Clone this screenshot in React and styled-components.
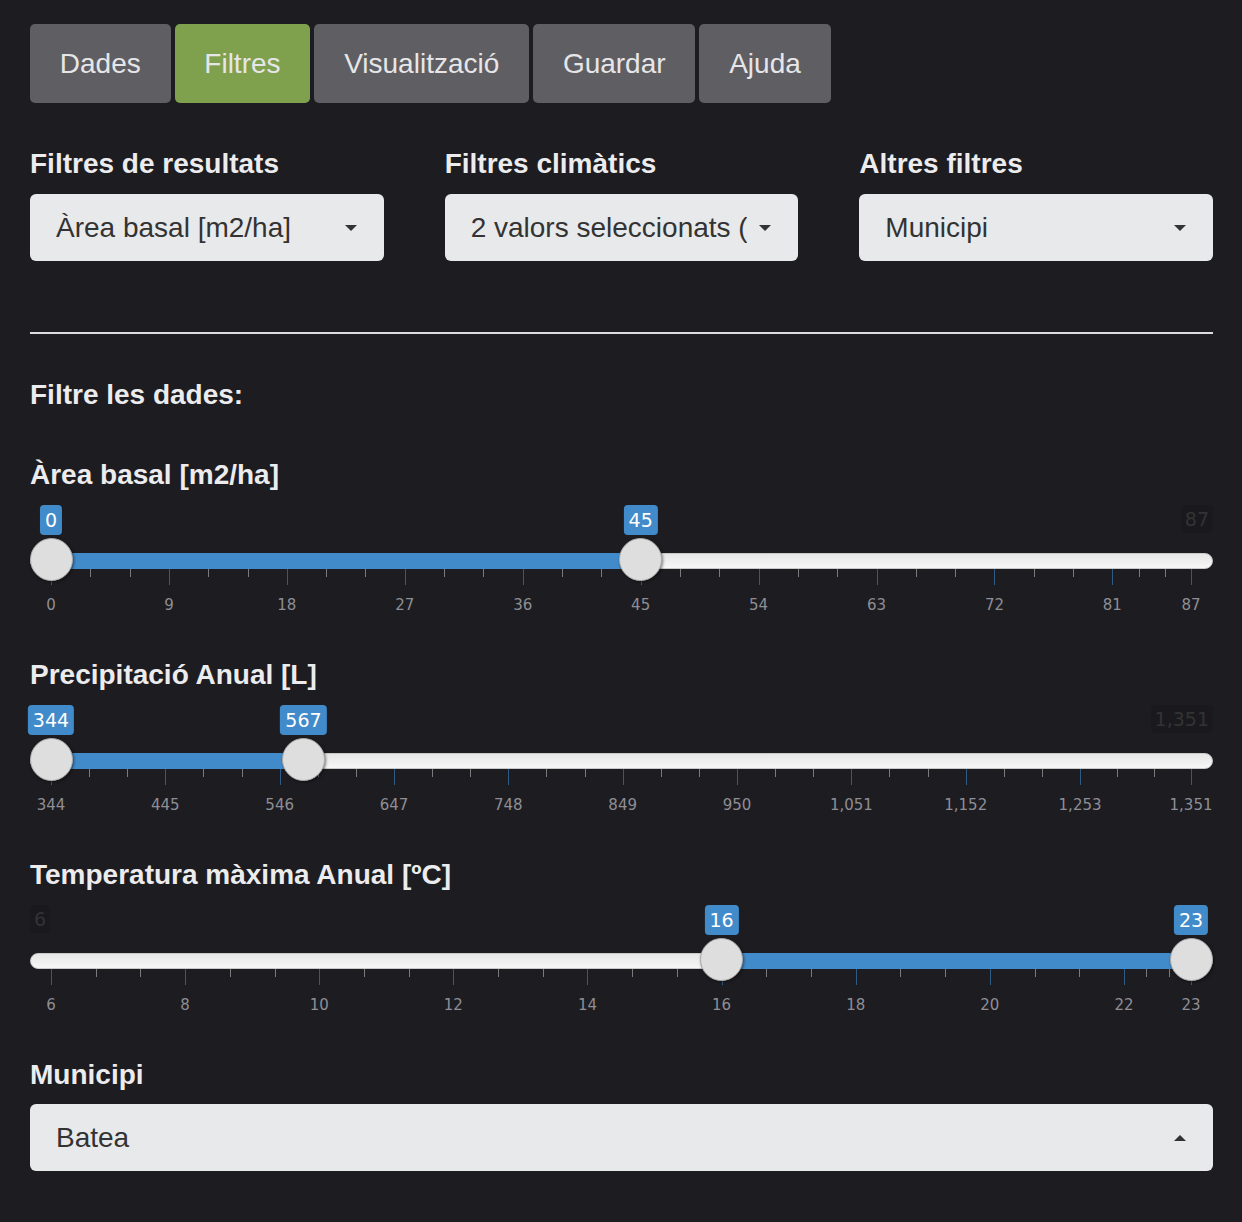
import React from "react";
import styled, { createGlobalStyle } from "styled-components";

const GlobalStyle = createGlobalStyle`
  body{
    margin:0;
    background:#1d1c21;
    font-family:"Liberation Sans", Arial, sans-serif;
    color:#e9e9ea;
  }
`;

const Page = styled.div`
  width:1183px;
  padding:24px 29px 40px 30px;
`;

const TabBar = styled.div`
  display:flex;
  gap:4px;
`;

const Tab = styled.div`
  height:79px;
  padding:0 29.8px;
  display:flex;
  align-items:center;
  border-radius:5px;
  font-size:28px;
  color:#e6e6e8;
  background:${p => (p.active ? "#7fa04d" : "#5f5e63")};
`;

const FilterRow = styled.div`
  margin-top:41px;
  display:grid;
  grid-template-columns:repeat(3, minmax(0, 1fr));
  column-gap:61px;
`;

const Field = styled.div`
  min-width:0;
`;

const Label = styled.div`
  height:40px;
  line-height:40px;
  font-size:28px;
  font-weight:bold;
  color:#ececee;
  margin-top:${p => p.top || 0}px;
`;

const Select = styled.div`
  position:relative;
  margin-top:${p => (p.tight ? 9 : 10)}px;
  height:67px;
  box-sizing:border-box;
  padding:0 51px 0 26px;
  display:flex;
  align-items:center;
  background:#e8e9eb;
  border-radius:6px;
  font-size:28px;
  color:#333;
`;

const Value = styled.span`
  flex:1;
  min-width:0;
  white-space:nowrap;
  overflow:hidden;
`;

const Caret = styled.span`
  position:absolute;
  right:27px;
  top:50%;
  margin-top:-3px;
  width:0;
  height:0;
  border-left:6px solid transparent;
  border-right:6px solid transparent;
  ${p => (p.up ? "border-bottom:6px solid #333;" : "border-top:6px solid #333;")}
`;

const Rule = styled.hr`
  margin:71px 0 0;
  border:0;
  height:2px;
  background:#dcdcde;
`;

const Slider = styled.div`
  display:flex;
  flex-direction:column;
  margin:5px 0 36px;
  height:119px;
  font-family:"DejaVu Sans", Verdana, sans-serif;
`;

/* each row of the slider is a strip; the things inside sit at their value */
const Strip = styled.div`
  position:relative;
  height:${p => p.h}px;
  flex:none;
`;

const Line = styled.div`
  margin-top:${p => p.top}px;
  height:16px;
  box-sizing:border-box;
  border-radius:8px;
  border:1px solid #c9c9c9;
  background:linear-gradient(to bottom, #dedede -50%, #ffffff 150%);
`;

const Bar = styled.div`
  position:absolute;
  top:15px;
  height:16px;
  background:#428bca;
`;

const Handle = styled.div`
  position:absolute;
  top:0;
  width:43px;
  height:43px;
  margin-left:-21.5px;
  box-sizing:border-box;
  border-radius:50%;
  border:1px solid #ababab;
  background:#dedede;
  box-shadow:1px 1px 3px rgba(0,0,0,0.5);
`;

const Badge = styled.div`
  position:absolute;
  top:5px;
  transform:translateX(-50%);
  height:30px;
  line-height:30px;
  padding:0 5px;
  border-radius:4px;
  font-size:19px;
  color:#fff;
  background:#428bca;
`;

const Ghost = styled.div`
  position:absolute;
  top:5px;
  ${p => (p.side === "right" ? "right:0;" : "left:0;")}
  height:28px;
  line-height:28px;
  padding:0 4px;
  border-radius:4px;
  font-size:19px;
  color:#333;
  background:rgba(0,0,0,0.1);
`;

const Tick = styled.div`
  position:absolute;
  top:31px;
  width:1px;
  height:${p => (p.major ? 16 : 8)}px;
  background:${p => (p.major ? "#2f5c87" : "#7a7a80")};
`;

const TickText = styled.div`
  position:absolute;
  bottom:0;
  transform:translateX(-50%);
  font-size:15px;
  line-height:18px;
  color:#8e8e94;
`;

const sliders = [
  { label: "Àrea basal [m2/ha]", min: 0, max: 87, from: 0, to: 45, marks: [0, 9, 18, 27, 36, 45, 54, 63, 72, 81, 87] },
  { label: "Precipitació Anual [L]", min: 344, max: 1351, from: 344, to: 567, marks: [344, 445, 546, 647, 748, 849, 950, 1051, 1152, 1253, 1351] },
  { label: "Temperatura màxima Anual [ºC]", min: 6, max: 23, from: 16, to: 23, marks: [6, 8, 10, 12, 14, 16, 18, 20, 22, 23] },
];

const fmt = n => n.toLocaleString("en-US");
// the handles travel between 21px and (width - 22px)
const pos = f => `calc(21px + ${f} * (100% - 43px))`;

const RangeSlider = ({ min, max, from, to, marks }) => {
  const frac = v => (v - min) / (max - min);
  const ticks = [];
  marks.forEach((m, i) => {
    ticks.push({ f: frac(m), major: true });
    if (i < marks.length - 1) {
      const a = frac(m), b = frac(marks[i + 1]);
      ticks.push({ f: a + (b - a) / 3 }, { f: a + (2 * (b - a)) / 3 });
    }
  });
  return (
    <Slider>
      <Strip h={38}>
        {from !== min && <Ghost side="left">{fmt(min)}</Ghost>}
        {to !== max && <Ghost side="right">{fmt(max)}</Ghost>}
        <Badge style={{ left: pos(frac(from)) }}>{fmt(from)}</Badge>
        <Badge style={{ left: pos(frac(to)) }}>{fmt(to)}</Badge>
      </Strip>
      <Strip h={32}>
        <Line top={15} />
        <Bar style={{ left: pos(frac(from)), width: `calc(${frac(to) - frac(from)} * (100% - 43px))` }} />
        {ticks.map((t, i) => (
          <Tick key={i} major={t.major} style={{ left: pos(t.f) }} />
        ))}
        <Handle style={{ left: pos(frac(from)) }} />
        <Handle style={{ left: pos(frac(to)) }} />
      </Strip>
      <Strip h={44}>
        {marks.map(m => (
          <TickText key={m} style={{ left: pos(frac(m)) }}>{fmt(m)}</TickText>
        ))}
      </Strip>
    </Slider>
  );
};

const App = () => (
  <Page>
    <GlobalStyle />
    <TabBar>
      <Tab>Dades</Tab>
      <Tab active>Filtres</Tab>
      <Tab>Visualització</Tab>
      <Tab>Guardar</Tab>
      <Tab>Ajuda</Tab>
    </TabBar>
    <FilterRow>
      <Field>
        <Label>Filtres de resultats</Label>
        <Select><Value>Àrea basal [m2/ha]</Value><Caret /></Select>
      </Field>
      <Field>
        <Label>Filtres climàtics</Label>
        <Select><Value>2 valors seleccionats (2 de 6)</Value><Caret /></Select>
      </Field>
      <Field>
        <Label>Altres filtres</Label>
        <Select><Value>Municipi</Value><Caret /></Select>
      </Field>
    </FilterRow>
    <Rule />
    <Label top={41}>Filtre les dades:</Label>
    <Label top={40}>{sliders[0].label}</Label>
    <RangeSlider {...sliders[0]} />
    {sliders.slice(1).map(s => (
      <React.Fragment key={s.label}>
        <Label>{s.label}</Label>
        <RangeSlider {...s} />
      </React.Fragment>
    ))}
    <Label>Municipi</Label>
    <Select tight><Value>Batea</Value><Caret up /></Select>
  </Page>
);

export default App;
